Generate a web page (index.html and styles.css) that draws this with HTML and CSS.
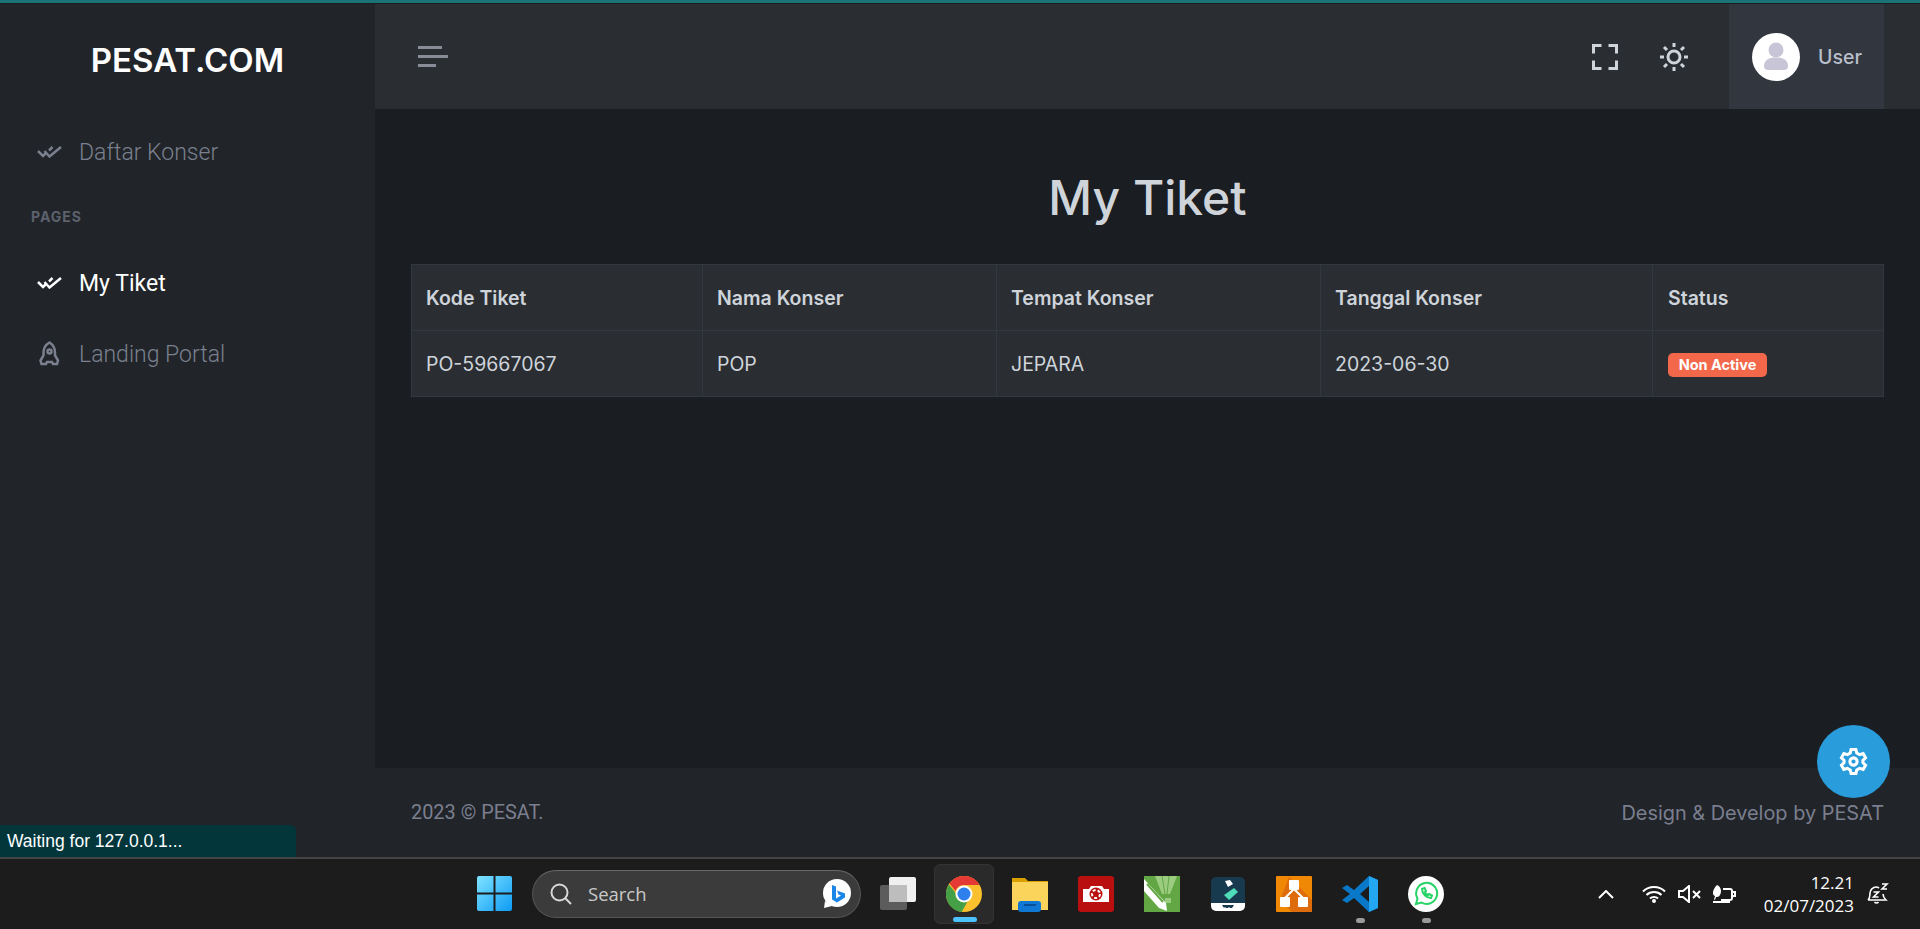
FILE: index.html
```html
<!DOCTYPE html>
<html lang="id">
<head>
  <meta charset="UTF-8">
  <meta name="viewport" content="width=device-width, initial-scale=1.0">
  <title>My Tiket</title>
  <link rel="stylesheet" href="styles.css">
</head>
<body>
  <div class="top-line"></div>

  <div class="app">
    <aside class="sidebar">
      <div class="brand">PESAT.COM</div>
      <a class="nav-item nav-first">
        <svg class="nav-icon" viewBox="0 0 25 12"><path d="M1 5l5 5 2.500-2.500M12 4.500L15.500 1M7.500 5l5 5.500L24 1"/></svg>
        Daftar Konser
      </a>
      <div class="nav-title">PAGES</div>
      <a class="nav-item nav-active">
        <svg class="nav-icon" viewBox="0 0 25 12"><path d="M1 5l5 5 2.500-2.500M12 4.500L15.500 1M7.500 5l5 5.500L24 1"/></svg>
        My Tiket
      </a>
      <a class="nav-item">
        <svg class="nav-icon nav-rocket" viewBox="0 0 25 26"><path d="M12.500 1.500c4 2.500 5.500 6 5.500 10v3l3 5-1 3.500h-4l-1-2h-5l-1 2H4.500l-1-3.500 3-5v-3c0-4 1.500-7.500 6-10z"/><circle cx="12.500" cy="10.500" r="2"/></svg>
        Landing Portal
      </a>
    </aside>

    <div class="main">
      <header class="topbar">
        <button class="menu-btn"><span></span><span></span><span></span></button>
        <div class="topbar-right">
          <svg class="top-icon icon-full" viewBox="0 0 26 26"><path d="M1.500 9.500V1.500H9.500M16.500 1.500h8V9.500M24.500 16.500v8H16.500M9.500 24.500H1.500V16.500"/></svg>
          <svg class="top-icon icon-sun" viewBox="0 0 28 28"><circle cx="14" cy="14" r="6"/><path d="M14 0v4M14 24v4M0 14h4M24 14h4M4 4l3 3M21 21l3 3M4 24l3-3M21 7l3-3"/></svg>
          <div class="user-box">
            <div class="avatar">
              <svg viewBox="0 0 48 48"><circle cx="24" cy="17" r="7.500"/><path d="M12 33c0-6 5-8.500 12-8.500S36 27 36 33c0 3-2 4-4 4H16c-2 0-4-1-4-4z"/></svg>
            </div>
            <span class="user-name">User</span>
          </div>
        </div>
      </header>

      <main class="content">
        <h1>My Tiket</h1>
        <table class="ticket-table">
          <colgroup>
            <col class="col-kode"><col class="col-nama"><col class="col-tempat"><col class="col-tanggal"><col>
          </colgroup>
          <thead>
            <tr>
              <th>Kode Tiket</th>
              <th>Nama Konser</th>
              <th>Tempat Konser</th>
              <th>Tanggal Konser</th>
              <th>Status</th>
            </tr>
          </thead>
          <tbody>
            <tr>
              <td>PO-59667067</td>
              <td>POP</td>
              <td>JEPARA</td>
              <td>2023-06-30</td>
              <td><span class="badge">Non Active</span></td>
            </tr>
          </tbody>
        </table>
      </main>

      <footer class="footer">
        <span class="copyright">2023 © PESAT.</span>
        <span>Design &amp; Develop by PESAT</span>
      </footer>
    </div>
  </div>

  <button class="settings-btn">
    <svg viewBox="0 0 24 24"><circle cx="12" cy="12" r="3"/><path d="M10 2h4l.7 3 2.300 1.300 3-.9 2 3.500-2.200 2.100v2l2.200 2.100-2 3.500-3-.9-2.300 1.300-.7 3h-4l-.7-3L7 17.700l-3 .9-2-3.500L4.200 13v-2L2 8.900l2-3.500 3 .9L9.300 5z"/></svg>
  </button>

  <div class="status-bubble">Waiting for 127.0.0.1...</div>

  <div class="taskbar">
    <div class="task-center">
      <svg class="win-logo" viewBox="0 0 35 35">
        <defs>
          <linearGradient id="win" x1="0" y1="0" x2="1" y2="1"><stop offset="0" stop-color="#7fe3ff"/><stop offset="1" stop-color="#0e9bf5"/></linearGradient>
        </defs>
        <path fill="url(#win)" d="M2 0h14.500v16.500H0V2a2 2 0 0 1 2-2zM18.500 0H33a2 2 0 0 1 2 2v14.500H18.500zM0 18.500h16.500V35H2a2 2 0 0 1-2-2zM18.500 18.500H35V33a2 2 0 0 1-2 2H18.500z"/>
      </svg>
      <div class="search-pill">
        <svg class="search-icon" viewBox="0 0 22 22"><circle cx="9.500" cy="9.500" r="8"/><path d="M15 15l6 6"/></svg>
        <span class="search-text">Search</span>
        <svg class="bing" viewBox="0 0 30 30"><circle cx="15" cy="14" r="14" fill="#fff"/><path d="M3 22l-1 7 8-2z" fill="#fff"/><path d="M10 6l4 1.500v12l5-3-2.500-1-1.500-4 8 3v4l-8 5-5-3z" fill="#1b86e8"/></svg>
      </div>
      <svg class="task-view" viewBox="0 0 36 36"><rect x="0" y="9" width="27" height="25" rx="2" fill="#5c5c5c"/><rect x="9" y="1" width="27" height="25" rx="2" fill="#f0f0f0"/><rect x="9" y="9" width="18" height="17" fill="#bdbdbd"/></svg>

      <div class="app-tile tile-active">
        <svg viewBox="0 0 36 36">
          <circle cx="18" cy="18" r="18" fill="#fbc02d"/>
          <path d="M18 0a18 18 0 0 1 15.600 9H18a9 9 0 0 0-8.500 6L3.400 7.400A18 18 0 0 1 18 0z" fill="#e53935"/>
          <path d="M2.800 8.500A18 18 0 0 0 15.500 36l6-10.300a9 9 0 0 1-12-9z" fill="#43a047"/>
          <circle cx="18" cy="18" r="8.500" fill="#fff"/><circle cx="18" cy="18" r="6.500" fill="#2f7fec"/>
        </svg>
        <span class="run-mark run-active"></span>
      </div>
      <div class="app-tile">
        <svg viewBox="0 0 36 36">
          <path d="M0 2h13l3 3h20v4H0z" fill="#d9a100"/><rect y="6" width="36" height="28" fill="#fbd45c"/>
          <rect x="6" y="25" width="23" height="11" rx="3" fill="#0f78d4"/><rect x="12" y="28" width="12" height="2" fill="#0a4f96"/>
        </svg>
      </div>
      <div class="app-tile">
        <svg viewBox="0 0 36 36">
          <rect width="36" height="36" rx="3" fill="#b90f0f"/>
          <path d="M5 13h6l2-3h11l2 3h5v13H5z" fill="#fff"/><circle cx="18" cy="18" r="6.500" fill="#b90f0f"/><circle cx="18" cy="18" r="4" fill="none" stroke="#fff" stroke-width="2" stroke-dasharray="3 2"/>
        </svg>
      </div>
      <div class="app-tile">
        <svg viewBox="0 0 36 36">
          <rect width="36" height="36" fill="#62a744"/>
          <path d="M11 0h22l-7 18h-8z" fill="#9ccc80"/><path d="M18 0l3 18M25 0l-2 18" stroke="#62a744" fill="none"/>
          <rect x="21" y="22" width="6" height="5" fill="#9ccc80"/>
          <path d="M0 3l22 24 1 8-8-3L0 15z" fill="#fff"/><path d="M3 8l16 18" stroke="#62a744" stroke-width="2"/>
        </svg>
      </div>
      <div class="app-tile">
        <svg viewBox="0 0 36 36">
          <path d="M6 1h24a5 5 0 0 1 5 5v21H1V6a5 5 0 0 1 5-5z" fill="#183a4f"/>
          <path d="M1 27h34v3a5 5 0 0 1-5 5H6a5 5 0 0 1-5-5z" fill="#fff"/>
          <path d="M15 5l5-1 3 4-5 3z" fill="#fff"/><path d="M24 12l4 4-9 8-5-5z" fill="#4fdcb8"/>
          <path d="M12 29h12l-2 3h-2l-1-1-1 1h-2l-1-1-1 1z" fill="#183a4f"/>
        </svg>
      </div>
      <div class="app-tile">
        <svg viewBox="0 0 36 36">
          <rect width="36" height="36" rx="1" fill="#f08705"/>
          <path d="M13 1l23 23v12H16L4 24z" fill="#df6c0c"/>
          <rect x="13" y="4" width="10" height="10" rx="1" fill="#fff"/><rect x="4" y="21" width="10" height="10" rx="1" fill="#fff"/><rect x="22" y="21" width="10" height="10" rx="1" fill="#fff"/>
          <path d="M18 13L9 22M18 13l9 9" stroke="#fff" stroke-width="2"/>
        </svg>
      </div>
      <div class="app-tile">
        <svg viewBox="0 0 36 36">
          <path d="M27 0l9 4v28l-9 4-15-14-7 5-5-3 8-6-8-6 5-3 7 5z" fill="#0a78c9"/>
          <path d="M27 0l9 4v28l-9 4z" fill="#22a7f0"/>
          <path d="M27 10l-9 8 9 8z" fill="#1c1c1c"/>
        </svg>
        <span class="run-mark"></span>
      </div>
      <div class="app-tile">
        <svg viewBox="0 0 36 36">
          <circle cx="18" cy="18" r="18" fill="#fff"/>
          <path class="wa-line" d="M8 28l1.500-5.500A10.500 10.500 0 1 1 13.500 26.500z"/>
          <path class="wa-line" d="M14 13c0 4.500 4.500 9 9 9l1-2.500-3-1.500-1 1c-1.500-.5-2.500-1.500-3-3l1-1-1.500-3z"/>
        </svg>
        <span class="run-mark"></span>
      </div>
    </div>

    <div class="tray">
      <svg class="tray-chevron" viewBox="0 0 16 9"><path d="M1 8l7-7 7 7"/></svg>
      <svg class="tray-icon" viewBox="0 0 24 18"><path d="M1 6.500c6-6 16-6 22 0M4.500 10c4-4 11-4 15 0M8 13.500c2-2 6-2 8 0"/><circle class="tray-fill" cx="12" cy="16" r="2"/></svg>
      <svg class="tray-icon tray-speaker" viewBox="0 0 24 18"><path d="M1 6h4l6-5v16l-6-5H1zM15 6l7 7M22 6l-7 7"/></svg>
      <svg class="tray-icon" viewBox="0 0 24 18"><path d="M11 4h7a2 2 0 0 1 2 2v7a2 2 0 0 1-2 2H9M1 17h17M20 7h3v4h-3"/><path class="tray-fill" d="M5 0c4 2 5 6 3 10-1 2-3 2-4 2l-1 3-1-.5 1-3.500C0 10 0 5 5 0z"/></svg>
      <div class="clock">
        <div>12.21</div>
        <div>02/07/2023</div>
      </div>
      <svg class="tray-bell" viewBox="0 0 22 22"><path d="M1 17c2-2 2-4 2-7s3-6 6-6c1 0 2 .3 3 1M16 11c0 3 1 4 3 6H1M7.500 19a2.500 2.500 0 0 0 4 0M15 1h5l-5 5h5M6.500 9h5l-5 5h5"/></svg>
    </div>
  </div>
</body>
</html>
```

FILE: styles.css
```css
* {
  margin: 0;
  padding: 0;
  box-sizing: border-box;
}

body {
  display: flex;
  flex-direction: column;
  height: 100vh;
  overflow: hidden;
  background-color: #1a1d21;
  font-family: "Inter", sans-serif;
}

.top-line {
  height: 4px;
  background-color: #1c7377;
  border-bottom: 1px solid #1a1d21;
}

.app {
  display: flex;
  flex: 1;
  min-height: 0;
}

/* sidebar */
.sidebar {
  width: 375px;
  background-color: #212429;
  font-family: "Roboto", sans-serif;
}

.brand {
  height: 105px;
  line-height: 112px;
  text-align: center;
  font-family: "Inter", sans-serif;
  font-size: 33px;
  font-weight: 600;
  color: #fff;
}

.nav-item {
  display: flex;
  align-items: center;
  gap: 17px;
  height: 30px;
  padding-left: 37px;
  margin-bottom: 41px;
  font-size: 23px;
  font-weight: 300;
  color: #7a808e;
}

.nav-first {
  margin-top: 28px;
  margin-bottom: 0;
}

.nav-active {
  color: #fff;
  font-weight: 400;
}

.nav-icon {
  width: 25px;
  height: 12px;
  fill: none;
  stroke: currentColor;
  stroke-width: 2.500;
}

.nav-rocket {
  height: 26px;
}

.nav-title {
  margin: 41px 0 43px 31px;
  font-family: "Inter", sans-serif;
  font-size: 14px;
  line-height: 17px;
  font-weight: 700;
  letter-spacing: 1px;
  color: #5c616d;
}

/* header */
.main {
  display: flex;
  flex: 1;
  flex-direction: column;
  min-width: 0;
}

.topbar {
  display: flex;
  justify-content: space-between;
  align-items: center;
  height: 105px;
  padding-left: 43px;
  padding-right: 36px;
  background-color: #2a2e32;
}

.menu-btn {
  display: flex;
  flex-direction: column;
  gap: 6px;
  width: 30px;
  background: none;
  border: none;
}

.menu-btn span {
  display: block;
  height: 3px;
  width: 24px;
  background-color: #878c97;
}

.menu-btn span:nth-child(2) {
  width: 30px;
}

.menu-btn span:nth-child(3) {
  width: 18px;
}

.topbar-right {
  display: flex;
  align-items: center;
  height: 100%;
}

.top-icon {
  fill: none;
  stroke: #ced4da;
  stroke-width: 3;
}

.icon-full {
  width: 26px;
  height: 26px;
  margin-right: 42px;
}

.icon-sun {
  width: 28px;
  height: 28px;
  margin-right: 41px;
}

.user-box {
  display: flex;
  align-items: center;
  gap: 18px;
  width: 155px;
  height: 100%;
  padding-left: 23px;
  background-color: #32363e;
}

.avatar {
  width: 48px;
  height: 48px;
  border-radius: 50%;
  background-color: #fff;
}

.avatar svg {
  display: block;
  fill: #c8c6d6;
}

.user-name {
  font-size: 19.500px;
  font-weight: 500;
  color: #b8bfca;
}

/* content */
.content {
  flex: 1;
  padding: 0 36px;
  background-color: #1a1d21;
}

h1 {
  height: 155px;
  padding-top: 57px;
  line-height: 64px;
  text-align: center;
  font-size: 48px;
  font-weight: 500;
  color: #ced4da;
}

.ticket-table {
  width: 100%;
  table-layout: fixed;
  border-collapse: collapse;
  background-color: #2a2e32;
  color: #ced4da;
  font-size: 19.500px;
}

.col-kode {
  width: 291px;
}

.col-nama {
  width: 294px;
}

.col-tempat {
  width: 324px;
}

.col-tanggal {
  width: 332px;
}

th, td {
  height: 66px;
  padding: 0 14px;
  text-align: left;
  border: 1px solid #32383e;
}

th:last-child, td:last-child {
  padding-left: 15px;
}

th {
  font-weight: 600;
}

.badge {
  display: inline-block;
  width: 99px;
  height: 24px;
  line-height: 24px;
  text-align: center;
  border-radius: 5px;
  background-color: #f3684a;
  color: #fff;
  font-size: 14.500px;
  font-weight: 700;
}

/* footer */
.footer {
  display: flex;
  justify-content: space-between;
  align-items: center;
  height: 89px;
  padding: 0 36px;
  background-color: #212429;
  color: #7a7f8f;
  font-size: 19.900px;
}

.copyright {
  font-family: "Roboto", sans-serif;
}

.settings-btn {
  position: absolute;
  left: 1817px;
  top: 725px;
  width: 73px;
  height: 73px;
  border: none;
  border-radius: 50%;
  background-color: #299cdb;
}

.settings-btn svg {
  display: block;
  width: 29px;
  height: 29px;
  margin: 0 auto;
  fill: none;
  stroke: #fff;
  stroke-width: 2.500;
}

.status-bubble {
  position: absolute;
  left: 0;
  top: 825px;
  width: 296px;
  height: 32px;
  padding-left: 7px;
  line-height: 33px;
  border-top-right-radius: 6px;
  background-color: #02363b;
  color: #fff;
  font-family: "Liberation Sans", sans-serif;
  font-size: 17.500px;
}

/* taskbar */
.taskbar {
  position: relative;
  display: flex;
  justify-content: flex-end;
  align-items: center;
  height: 72px;
  border-top: 2px solid #444;
  background-color: #1c1c1c;
  font-family: "Open Sans", sans-serif;
}

.task-center {
  position: absolute;
  left: 477px;
  top: 0;
  display: flex;
  align-items: center;
  height: 69px;
}

.win-logo {
  width: 35px;
  height: 35px;
  margin-right: 20px;
}

.search-pill {
  display: flex;
  align-items: center;
  width: 329px;
  height: 48px;
  margin-right: 19px;
  padding-left: 17px;
  border: 1px solid #555;
  border-top-color: #686868;
  border-radius: 24px;
  background-color: #3b3b3b;
}

.search-icon {
  width: 22px;
  height: 22px;
  fill: none;
  stroke: #d8d8d8;
  stroke-width: 2;
}

.search-text {
  flex: 1;
  margin-left: 16px;
  font-size: 18.500px;
  color: #c9c9c9;
}

.bing {
  width: 30px;
  height: 30px;
  margin-right: 8px;
}

.task-view {
  width: 36px;
  height: 36px;
  margin-right: 18px;
}

.app-tile {
  position: relative;
  display: flex;
  justify-content: center;
  align-items: center;
  width: 60px;
  height: 60px;
  margin-right: 6px;
  border-radius: 6px;
}

.app-tile svg {
  width: 36px;
  height: 36px;
}

.tile-active {
  background-color: #2a2a2a;
  border: 1px solid #333;
}

.run-mark {
  position: absolute;
  left: 26px;
  bottom: 1px;
  width: 9px;
  height: 5px;
  border-radius: 3px;
  background-color: #9a9a9a;
}

.run-active {
  left: 18px;
  width: 24px;
  background-color: #4cc2ff;
}

.wa-line {
  fill: none;
  stroke: #25d366;
  stroke-width: 2;
}

.tray {
  display: flex;
  align-items: center;
  height: 100%;
  padding-right: 31px;
  color: #fff;
}

.tray-chevron {
  width: 16px;
  height: 9px;
  margin-right: 28px;
  fill: none;
  stroke: #fff;
  stroke-width: 2;
}

.tray-icon {
  width: 24px;
  height: 18px;
  margin-right: 12px;
  fill: none;
  stroke: #fff;
  stroke-width: 2;
}

.tray-speaker {
  margin-right: 10px;
}

.tray-fill {
  fill: #fff;
  stroke: none;
}

.clock {
  margin-left: 16px;
  margin-right: 13px;
  text-align: right;
  font-size: 17px;
  line-height: 23px;
}

.tray-bell {
  width: 22px;
  height: 22px;
  fill: none;
  stroke: #fff;
  stroke-width: 1.600;
}
```
